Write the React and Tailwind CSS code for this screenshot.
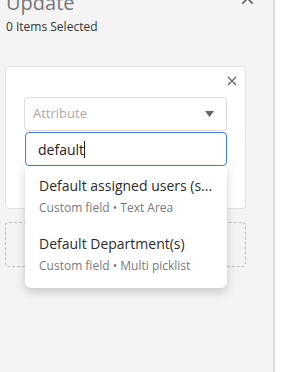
import React from 'react';

const CloseIcon = ({ size = 10, className = '' }) => (
  <svg width={size} height={size} viewBox="0 0 10 10" className={className}>
    <path d="M1 1 L9 9 M9 1 L1 9" stroke="currentColor" strokeWidth="1.3" fill="none" />
  </svg>
);

const options = [
  { title: 'Default assigned users (s...', meta: 'Custom field • Text Area' },
  { title: 'Default Department(s)', meta: 'Custom field • Multi picklist' },
];

export default function App() {
  return (
    <div
      className="flex w-[283px] h-[372px] overflow-hidden bg-white"
      style={{ fontFamily: '"Open Sans", "Noto Sans", sans-serif' }}
    >
      <div className="w-[275px] shrink-0 h-full bg-[#f4f4f4] border-r-2 border-[#dddddd]">
        <div className="relative -mt-[11px] pl-[6px]">
          <h1 className="text-[20px] leading-[28px] text-[#777777] font-normal">Update</h1>
          <p className="mt-[2px] text-[12px] leading-[16px] text-[#333333]">0 Items Selected</p>
          <button className="absolute right-[19px] top-[3px] text-[#666666]">
            <CloseIcon size={13} />
          </button>
        </div>

        <div className="relative mt-[31px] ml-[5px] w-[241px] h-[143px] bg-white border border-[#e2e2e2] rounded-[4px]">
          <div className="flex justify-end pt-[9px] pr-[8px]">
            <CloseIcon size={10} className="text-[#666666]" />
          </div>
          <div className="mx-[18px] mt-[11px] h-[34px] flex items-center justify-between px-[8px] border border-[#dddddd] rounded-[4px] bg-white">
            <span className="text-[13px] text-[#a9a9a9]">Attribute</span>
            <svg width="9" height="6" viewBox="0 0 9 6" className="mr-[4px]">
              <path d="M0 0 L9 0 L4.5 6 Z" fill="#666666" />
            </svg>
          </div>

          <div className="absolute z-10 left-[19px] top-[65px] w-[202px]">
            <div className="h-[34px] flex items-center px-[12px] bg-white border-[1.5px] border-[#3d7fd8] rounded-[4px]">
              <span className="text-[14px] text-[#222222]">default</span>
              <span className="w-px h-[17px] bg-[#222222]" />
            </div>
            <div className="bg-white rounded-b-[6px] shadow-[0_4px_10px_rgba(0,0,0,0.18)] pt-[1px] pb-[5px]">
              {options.map((o) => (
                <div key={o.title} className="px-[14px] py-[9px]">
                  <div className="text-[14px] leading-[20px] text-[#2b2b2b] whitespace-nowrap">{o.title}</div>
                  <div className="mt-[4px] text-[12px] leading-[16px] text-[#7a7a7a] whitespace-nowrap">{o.meta}</div>
                </div>
              ))}
            </div>
          </div>
        </div>

        <div className="mt-[13px] ml-[5px] w-[241px] h-[45px] border border-dashed border-[#bdbdbd] rounded-[4px]" />
      </div>
      <div className="flex-1" />
    </div>
  );
}
